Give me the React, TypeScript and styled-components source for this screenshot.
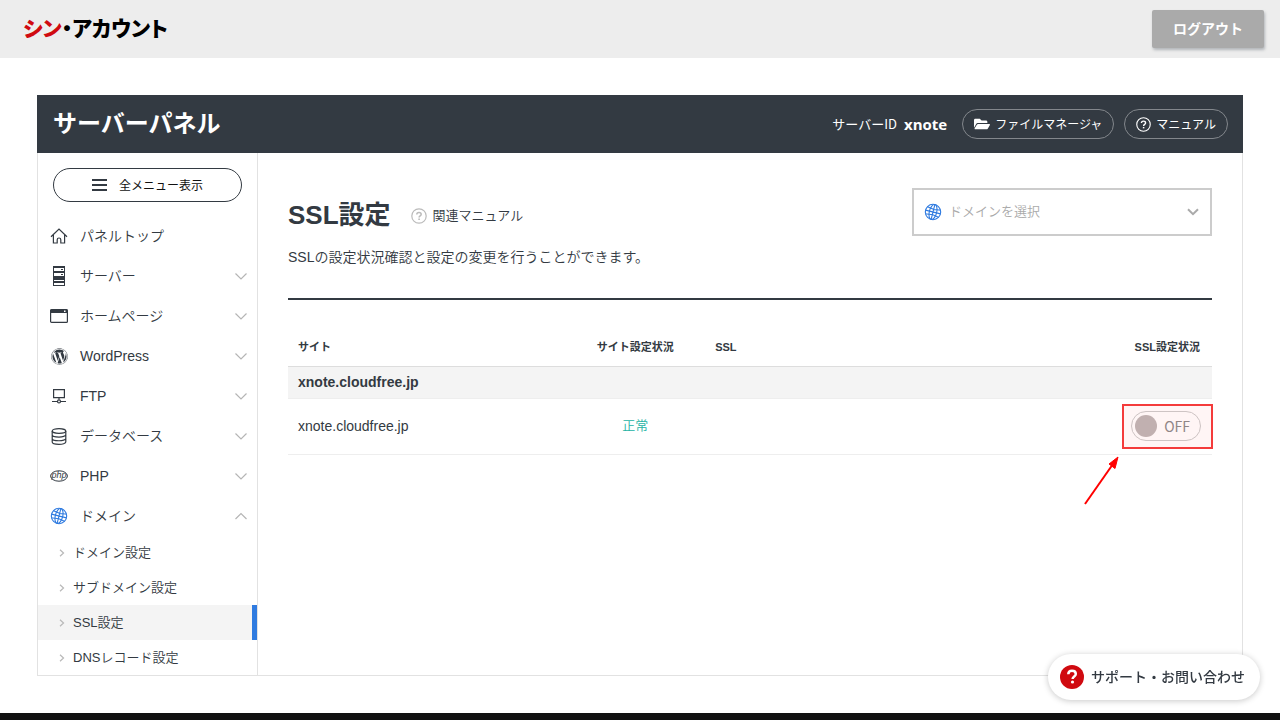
import React from "react";
import styled, { createGlobalStyle, css } from "styled-components";
import { FaFolderOpen, FaWordpress } from "react-icons/fa";

const ink = "#333a42";
const line = "#e2e2e2";
const blue = "#2f7be0";
const sans = `"Liberation Sans", "Noto Sans CJK JP", sans-serif`;
const jp = `"Noto Sans CJK JP", sans-serif`;

const GlobalStyle = createGlobalStyle`
  *, *::before, *::after { box-sizing: border-box; }
  body { margin: 0; background: #fff; color: ${ink}; font: 350 14px/22px ${sans}; }
  h1, h2, p, ul { margin: 0; padding: 0; }
  ul { list-style: none; }
  a { color: inherit; text-decoration: none; }
  button, select, input { font: inherit; color: inherit; margin: 0; }
  button { cursor: pointer; }
  svg { display: block; flex: none; }
`;

const Page = styled.div`
  min-height: 100vh;
  display: flex;
  flex-direction: column;
`;

const TopBar = styled.header`
  height: 58px;
  padding: 0 16px 0 23px;
  display: flex;
  align-items: center;
  justify-content: space-between;
  background: #ededed;
`;

const Brand = styled.a`
  && { color: #000; }
  padding-bottom: 4px;
  font: 900 21px/32px ${jp};
  font-feature-settings: "palt";
`;

const BrandAccent = styled.span`
  color: #d00a10;
`;

const LogoutButton = styled.button`
  height: 38px;
  padding: 0 21px 2px;
  border: 0;
  border-radius: 2px;
  background: #aaa;
  color: #fff;
  font: 700 14px/20px ${jp};
  box-shadow: 1px 2px 3px rgba(90, 100, 110, 0.4);
`;

const Main = styled.main`
  padding: 37px;
`;

const PanelHeader = styled.header`
  height: 58px;
  padding: 0 15px 0 16px;
  display: flex;
  align-items: center;
  justify-content: space-between;
  background: ${ink};
  color: #fff;
`;

const PanelTitle = styled.h2`
  font: 700 24px/36px ${jp};
  padding-bottom: 4px;
`;

const PanelTools = styled.div`
  display: flex;
  align-items: center;
  gap: 10px;
  font: 13px/20px ${jp};
`;

const ServerId = styled.p`
  padding-right: 5px;
  display: flex;
  gap: 7px;
`;

const ServerName = styled.strong`
  font: 700 15px/20px "Open Sans", sans-serif;
`;

const Pill = styled.a`
  height: 30px;
  padding: 0 11px;
  display: flex;
  align-items: center;
  gap: 5px;
  border: 1px solid #83878c;
  border-radius: 15px;
  font-size: 12px;
`;

const PanelBody = styled.div`
  display: flex;
  border: 1px solid ${line};
  border-top: 0;
`;

const Sidebar = styled.nav`
  width: 220px;
  flex: none;
  border-right: 1px solid ${line};
`;

const AllMenuButton = styled.button`
  width: calc(100% - 30px);
  height: 34px;
  margin: 15px 15px 14px;
  display: flex;
  align-items: center;
  justify-content: center;
  gap: 12px;
  border: 1px solid ${ink};
  border-radius: 17px;
  background: #fff;
  color: #111;
  font: 12px/20px ${jp};
`;

const MenuLink = styled.a`
  height: 40px;
  padding: 0 9px 0 12px;
  display: flex;
  align-items: center;
  gap: 12px;
`;

const MenuLabel = styled.span`
  flex: 1;
`;

const IconSlot = styled.span`
  width: 18px;
  display: flex;
  justify-content: center;
`;

const SubMenu = styled.ul`
  margin-top: -1px;
`;

const SubLink = styled.a<{ $active?: boolean }>`
  height: 35px;
  padding: 0 0 0 21px;
  display: flex;
  align-items: center;
  gap: 8px;
  font-size: 13px;
  ${(p) =>
    p.$active &&
    css`
      background: #f4f4f4;
      border-right: 5px solid ${blue};
    `}
`;

const Content = styled.section`
  flex: 1;
  min-width: 0;
  padding: 35px 30px 30px;
`;

const ContentHeader = styled.header`
  padding-bottom: 30px;
  border-bottom: 2px solid ${ink};
`;

const HeadingRow = styled.div`
  height: 48px;
  display: flex;
  align-items: center;
`;

const Heading = styled.h1`
  font: 700 26px/38px ${sans};
  padding-top: 6px;
`;

const ManualLink = styled.a`
  margin-left: 20px;
  padding-top: 8px;
  display: flex;
  align-items: center;
  gap: 6px;
  font-size: 13px;
`;

const DomainPicker = styled.label`
  width: 300px;
  height: 48px;
  margin-left: auto;
  padding: 0 11px 0 10px;
  display: flex;
  align-items: center;
  gap: 7px;
  border: 2px solid #ccc;
`;

const DomainSelect = styled.select`
  flex: 1;
  height: 44px;
  padding: 0;
  appearance: none;
  border: 0;
  outline: 0;
  background: transparent;
  color: #aaa;
  font-size: 13px;
`;

const Lead = styled.p`
  margin-top: 10px;
`;

const SiteTable = styled.table`
  width: 100%;
  margin-top: 28px;
  border-collapse: separate;
  border-spacing: 0;
  table-layout: fixed;
`;

const ColumnHead = styled.th<{ $width?: string; $align?: string }>`
  width: ${(p) => p.$width ?? "auto"};
  height: 39px;
  padding: 0 ${(p) => (p.$align === "right" ? "12px" : "10px")} 0 10px;
  border-bottom: 1px solid #ddd;
  text-align: ${(p) => p.$align ?? "left"};
  font: 700 11px/16px ${sans};
`;

const GroupHead = styled.th`
  height: 32px;
  padding: 0 10px 2px;
  background: #f4f4f4;
  border-bottom: 1px solid #eee;
  text-align: left;
  font: 700 14px/20px ${sans};
`;

const Cell = styled.td<{ $align?: string }>`
  height: 56px;
  padding: 0 10px 2px;
  border-bottom: 1px solid #eee;
  text-align: ${(p) => p.$align ?? "left"};
`;

const StatusOk = styled.span`
  color: #25b3a4;
  font-size: 13px;
`;

const ToggleFrame = styled.div`
  position: relative;
  width: 70px;
  margin: 0 1px 0 auto;
`;

const Toggle = styled.label`
  height: 30px;
  padding: 0 10px 0 3px;
  display: flex;
  align-items: center;
  justify-content: space-between;
  border: 1px solid #ccc;
  border-radius: 15px;
  color: #8c8c8c;
  font: 400 14px/20px ${jp};
`;

const ToggleInput = styled.input`
  width: 22px;
  height: 22px;
  appearance: none;
  border-radius: 50%;
  background: #bfb8b8;
`;

const Highlight = styled.div`
  position: absolute;
  inset: -7px -12px -8px -9px;
  border: 2px solid #f43b3b;
  background: rgba(255, 0, 0, 0.04);
  pointer-events: none;
`;

const Arrow = styled.svg`
  position: absolute;
  top: 45px;
  left: -49px;
  pointer-events: none;
`;

const Footer = styled.footer`
  flex: 1;
  min-height: 7px;
  background: #111;
`;

const SupportButton = styled.button`
  position: fixed;
  right: 20px;
  bottom: 20px;
  height: 46px;
  padding: 0 15px 0 12px;
  display: flex;
  align-items: center;
  gap: 7px;
  border: 0;
  border-radius: 23px;
  background: #fff;
  color: ${ink};
  font: 500 14px/22px ${jp};
  box-shadow: 0 1px 6px rgba(0, 0, 0, 0.22);
`;

const SupportLabel = styled.span`
  padding-bottom: 3px;
`;

const Chevron = ({ up = false }: { up?: boolean }) => (
  <svg width="14" height="8" viewBox="0 0 14 8" fill="none" stroke="#b5b5b5" strokeWidth="1.2">
    <path d={up ? "M1.5 7 7 1.5 12.5 7" : "M1.5 1.5 7 7l5.500-5.500"} />
  </svg>
);

const SubChevron = () => (
  <svg width="6" height="8" viewBox="0 0 6 8" fill="none" stroke="#b8b8b8" strokeWidth="1.2">
    <path d="M1 .8 4.500 4 1 7.200" />
  </svg>
);

const HelpIcon = ({ size, color }: { size: number; color: string }) => (
  <svg width={size} height={size} viewBox="0 0 16 16" fill="none" stroke={color} strokeWidth="1.200">
    <circle cx="8" cy="8" r="7.200" />
    <path d="M5.800 6.500c0-1.300.9-2.100 2.200-2.100s2.200.8 2.200 1.900c0 1.600-2.100 1.600-2.100 3.200" strokeWidth="1.500" />
    <path d="M8.100 10.600v1.500" strokeWidth="1.600" />
  </svg>
);

const GlobeIcon = () => (
  <svg width="18" height="18" viewBox="0 0 18 18" fill="none" stroke={blue} strokeWidth="1.100">
    <circle cx="9" cy="9" r="7.700" />
    <g transform="rotate(14 9 9)">
      <ellipse cx="9" cy="9" rx="3.700" ry="7.700" />
      <path d="M9 1.300v15.400M1.300 9h15.400M2.500 5.300c4 1.200 9 1.200 13 0M2.500 12.700c4-1.200 9-1.200 13 0" />
    </g>
  </svg>
);

const HomeIcon = () => (
  <svg width="18" height="16" viewBox="0 0 18 16" fill="none" stroke={ink} strokeWidth="1.200">
    <path d="M1 8.700 9 1l8 7.700M3.400 7v8h3.800v-3.200c0-2.400 3.600-2.400 3.600 0V15h3.800V7" />
  </svg>
);

const ServerIcon = () => (
  <svg width="12" height="20" viewBox="0 0 12 20">
    <path fill={ink} d="M0 0h12v20H0z" />
    <path fill="#fff" d="M1 2h10v3H1zM1 7h10v3H1zM1 14h10v1H1zM1 17h10v2H1z" />
    <path fill={ink} d="M8 3h2v1H8zM8 8h2v1H8z" />
  </svg>
);

const WindowIcon = () => (
  <svg width="18" height="14" viewBox="0 0 18 14">
    <rect x=".6" y=".6" width="16.800" height="12.800" rx="1" fill="#fff" stroke={ink} strokeWidth="1.200" />
    <path fill={ink} d="M.5.5h17V4H.5z" />
    <path fill="#fff" d="M14 1.500h1.500V3H14z" />
  </svg>
);

const FtpIcon = () => (
  <svg width="14" height="16" viewBox="0 0 14 16" fill="none" stroke={ink} strokeWidth="1.200">
    <path d="M1.600 1.600h10.800v8H1.600zM7 9.600v2M0 13.500h5.400M8.600 13.500H14" />
    <circle cx="7" cy="13.400" r="1.500" />
  </svg>
);

const DatabaseIcon = () => (
  <svg width="16" height="17" viewBox="0 0 16 17" fill="none" stroke={ink} strokeWidth="1.200">
    <ellipse cx="8" cy="3" rx="6.800" ry="2.300" />
    <path d="M1.200 3v11c0 3.100 13.600 3.100 13.600 0V3M1.200 6.700c0 3.100 13.600 3.100 13.600 0M1.200 10.400c0 3.100 13.600 3.100 13.600 0" />
  </svg>
);

const PhpIcon = () => (
  <svg width="18" height="12" viewBox="0 0 18 12">
    <ellipse cx="9" cy="6" rx="8.400" ry="5.200" fill="none" stroke={ink} strokeWidth="1" />
    <text x="9" y="8" textAnchor="middle" fontFamily="Liberation Sans" fontSize="9" fontStyle="italic" fill={ink}>
      php
    </text>
  </svg>
);

const menu = [
  { label: "パネルトップ", icon: <HomeIcon /> },
  { label: "サーバー", icon: <ServerIcon />, open: false },
  { label: "ホームページ", icon: <WindowIcon />, open: false },
  { label: "WordPress", icon: <FaWordpress size={17} />, open: false },
  { label: "FTP", icon: <FtpIcon />, open: false },
  { label: "データベース", icon: <DatabaseIcon />, open: false },
  { label: "PHP", icon: <PhpIcon />, open: false },
  {
    label: "ドメイン",
    icon: <GlobeIcon />,
    open: true,
    children: ["ドメイン設定", "サブドメイン設定", "SSL設定", "DNSレコード設定"],
  },
];

export default function App() {
  return (
    <>
      <GlobalStyle />
      <Page>
        <TopBar>
          <Brand href="#">
            <BrandAccent>シン</BrandAccent>・アカウント
          </Brand>
          <LogoutButton type="button">ログアウト</LogoutButton>
        </TopBar>

        <Main>
          <PanelHeader>
            <PanelTitle>サーバーパネル</PanelTitle>
            <PanelTools>
              <ServerId>
                サーバーID <ServerName>xnote</ServerName>
              </ServerId>
              <Pill href="#">
                <FaFolderOpen size={16} />
                ファイルマネージャ
              </Pill>
              <Pill href="#">
                <HelpIcon size={15} color="#fff" />
                マニュアル
              </Pill>
            </PanelTools>
          </PanelHeader>

          <PanelBody>
            <Sidebar>
              <AllMenuButton type="button">
                <svg width="15" height="12" viewBox="0 0 15 12">
                  <path fill={ink} d="M0 0h15v2H0zM0 5h15v2H0zM0 10h15v2H0z" />
                </svg>
                全メニュー表示
              </AllMenuButton>
              <ul>
                {menu.map((item) => (
                  <li key={item.label}>
                    <MenuLink href="#">
                      <IconSlot>{item.icon}</IconSlot>
                      <MenuLabel>{item.label}</MenuLabel>
                      {item.open !== undefined && <Chevron up={item.open} />}
                    </MenuLink>
                    {item.children && (
                      <SubMenu>
                        {item.children.map((child) => (
                          <li key={child}>
                            <SubLink href="#" $active={child === "SSL設定"}>
                              <SubChevron />
                              {child}
                            </SubLink>
                          </li>
                        ))}
                      </SubMenu>
                    )}
                  </li>
                ))}
              </ul>
            </Sidebar>

            <Content>
              <ContentHeader>
                <HeadingRow>
                  <Heading>SSL設定</Heading>
                  <ManualLink href="#">
                    <HelpIcon size={16} color="#bbb" />
                    関連マニュアル
                  </ManualLink>
                  <DomainPicker>
                    <GlobeIcon />
                    <DomainSelect aria-label="ドメイン">
                      <option>ドメインを選択</option>
                    </DomainSelect>
                    <svg width="12" height="8" viewBox="0 0 12 8" fill="none" stroke="#aaa" strokeWidth="2">
                      <path d="M1 1.200 6 6.200l5-5" />
                    </svg>
                  </DomainPicker>
                </HeadingRow>
                <Lead>SSLの設定状況確認と設定の変更を行うことができます。</Lead>
              </ContentHeader>

              <SiteTable>
                <thead>
                  <tr>
                    <ColumnHead $width="30%">サイト</ColumnHead>
                    <ColumnHead $width="140px" $align="center">サイト設定状況</ColumnHead>
                    <ColumnHead>SSL</ColumnHead>
                    <ColumnHead $width="140px" $align="right">SSL設定状況</ColumnHead>
                  </tr>
                </thead>
                <tbody>
                  <tr>
                    <GroupHead colSpan={4}>xnote.cloudfree.jp</GroupHead>
                  </tr>
                  <tr>
                    <Cell>xnote.cloudfree.jp</Cell>
                    <Cell $align="center">
                      <StatusOk>正常</StatusOk>
                    </Cell>
                    <Cell />
                    <Cell>
                      <ToggleFrame>
                        <Toggle>
                          <ToggleInput type="checkbox" role="switch" />
                          OFF
                        </Toggle>
                        <Highlight />
                        <Arrow width="38" height="50" viewBox="0 0 38 50">
                          <path d="M3 48 31 8" stroke="#f00" strokeWidth="2" fill="none" />
                          <path d="M36 1 27 8l6 4.500z" fill="#f00" stroke="#f00" />
                        </Arrow>
                      </ToggleFrame>
                    </Cell>
                  </tr>
                </tbody>
              </SiteTable>
            </Content>
          </PanelBody>
        </Main>

        <Footer />
      </Page>

      <SupportButton type="button">
        <svg width="24" height="24" viewBox="0 0 24 24">
          <circle cx="12" cy="12" r="12" fill="#d00a10" />
          <path d="M8.300 9.300c0-2.300 1.500-3.500 3.700-3.500s3.800 1.200 3.800 3.200c0 2.500-3.200 2.500-3.200 5" fill="none" stroke="#fff" strokeWidth="2.500" />
          <circle cx="12.500" cy="17" r="1.600" fill="#fff" />
        </svg>
        <SupportLabel>サポート・お問い合わせ</SupportLabel>
      </SupportButton>
    </>
  );
}
